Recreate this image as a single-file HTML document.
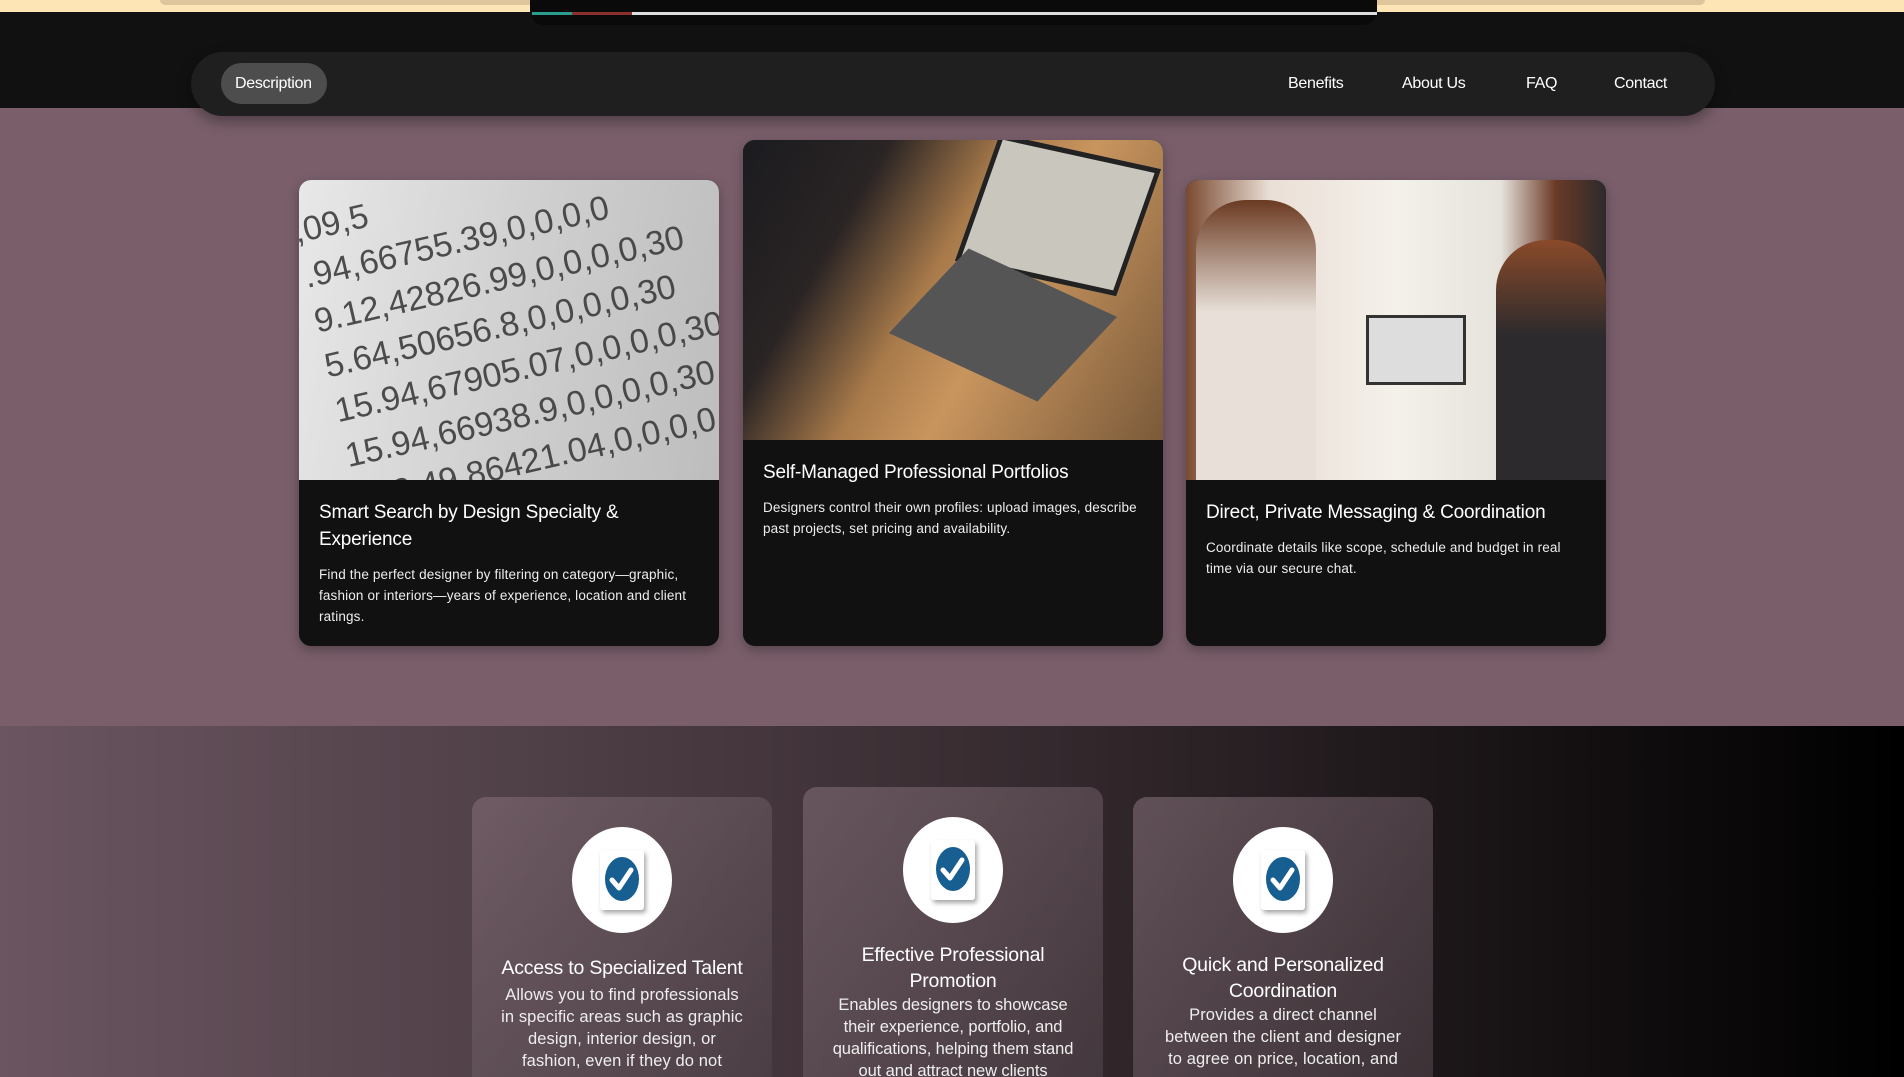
<!DOCTYPE html>
<html style="overflow:hidden;height:1077px"><head><meta charset="utf-8">
<style>
*{margin:0;padding:0;box-sizing:border-box}
body{width:1904px;height:1077px;overflow:hidden;background:#111;font-family:"Liberation Sans",sans-serif;color:#fff;position:relative}
.abs{position:absolute}
.nav{left:191px;top:52px;width:1524px;height:64px;background:#1f1f1f;border-radius:32px;box-shadow:0 6px 14px rgba(0,0,0,.35)}
.nav a{position:absolute;top:23px;font-size:16px;color:#fff;letter-spacing:-0.3px}
.pill{left:30px;top:11px;width:106px;height:41px;border-radius:21px;background:#4d4d4d}
.mauve{left:0;top:108px;width:1904px;height:618px;background:#7a5f6b}
.card{background:#111;border-radius:12px;overflow:hidden;box-shadow:0 4px 12px rgba(0,0,0,.3)}
.card .img{width:100%}
.card h3{font-size:19px;font-weight:normal;line-height:27px;margin:0 20px;letter-spacing:-0.2px}
.card p{font-size:13.5px;line-height:21px;margin:0 20px;color:#eee;letter-spacing:0.15px}
.bot{left:0;top:726px;width:1904px;height:351px;background:linear-gradient(90deg,#6a5560 0%,#3a2e33 50%,#000 100%)}
.bc{width:300px;border-radius:14px 14px 0 0;background:linear-gradient(135deg,rgba(130,108,118,.6),rgba(80,68,74,.6));text-align:center;overflow:hidden}
.circ{position:absolute;left:100px;top:30px;width:100px;height:106px;border-radius:50%;background:#fff}
.sq{position:absolute;left:28px;top:23px;width:44px;height:60px;background:#fff;border-radius:3px;box-shadow:2px 3px 5px rgba(0,0,0,.35)}
.bc h4{position:absolute;left:20px;right:20px;font-size:19.5px;font-weight:normal;line-height:26px;letter-spacing:-0.2px}
.bc p{position:absolute;left:26px;right:26px;font-size:16.5px;line-height:22px;color:#eee;letter-spacing:0.1px}
</style></head><body>
<div class="abs" style="left:0;top:0;width:1904px;height:12px;background:#fde5b6"></div>
<div class="abs" style="left:160px;top:0;width:1545px;height:5px;background:#dfc59c;border-radius:0 0 6px 6px"></div>
<div class="abs" style="left:530px;top:0;width:847px;height:25px;background:#0a0a0a;border-radius:0 0 14px 14px"></div>
<div class="abs" style="left:532px;top:12px;width:40px;height:3px;background:#2a9d8f"></div>
<div class="abs" style="left:572px;top:12px;width:60px;height:3px;background:#8b3030"></div>
<div class="abs" style="left:632px;top:12px;width:745px;height:3px;background:#ddd"></div>

<div class="mauve abs"></div>
<div class="nav abs">
<div class="pill abs"></div>
<a style="left:44px">Description</a>
<a style="left:1097px">Benefits</a>
<a style="left:1211px">About Us</a>
<a style="left:1335px">FAQ</a>
<a style="left:1423px">Contact</a>
</div>

<div class="card abs" style="left:299px;top:180px;width:420px;height:466px">
<div class="img" style="height:300px;background:linear-gradient(100deg,#e8e8e8,#d0d0d0 50%,#bdbdbd);overflow:hidden;position:relative">
<div style="position:absolute;left:-10px;top:0;transform:rotate(-13deg);transform-origin:0 0;font-size:34px;line-height:46px;color:#333;white-space:nowrap;margin-top:30px;opacity:.85">
,09,5<br>.94,66755.39,0,0,0,0<br>9.12,42826.99,0,0,0,0,30<br>5.64,50656.8,0,0,0,0,30<br>15.94,67905.07,0,0,0,0,30<br>15.94,66938.9,0,0,0,0,30<br>192.49,86421.04,0,0,0,0</div></div>
<h3 style="margin-top:19px">Smart Search by Design Specialty &amp; Experience</h3>
<p style="margin-top:11px">Find the perfect designer by filtering on category—graphic, fashion or interiors—years of experience, location and client ratings.</p>
</div>

<div class="card abs" style="left:743px;top:140px;width:420px;height:506px">
<div class="img" style="height:300px;background:linear-gradient(120deg,#1b1b1f 0%,#2a2424 25%,#a87a4a 45%,#c9955e 60%,#7a5a3a 100%);position:relative">
<div style="position:absolute;left:230px;top:10px;width:170px;height:130px;background:#c9c6be;transform:skew(-8deg) rotate(12deg);border:5px solid #222"></div>
<div style="position:absolute;left:160px;top:140px;width:200px;height:90px;background:#555;transform:skew(-30deg) rotate(20deg)"></div>
</div>
<h3 style="margin-top:19px">Self-Managed Professional Portfolios</h3>
<p style="margin-top:11px">Designers control their own profiles: upload images, describe past projects, set pricing and availability.</p>
</div>

<div class="card abs" style="left:1186px;top:180px;width:420px;height:466px">
<div class="img" style="height:300px;background:linear-gradient(90deg,#7a4a30 0%,#eadfd6 20%,#f4f1ea 50%,#e6e2dc 75%,#6a3a26 88%,#2c2a2c 100%);position:relative">
<div style="position:absolute;left:10px;top:20px;width:120px;height:280px;background:linear-gradient(180deg,#6b3a22,#e8e0d8 40%,#e8e0d8);border-radius:50px 50px 0 0"></div>
<div style="position:absolute;left:180px;top:135px;width:100px;height:70px;background:#ddd;border:3px solid #333"></div>
<div style="position:absolute;left:310px;top:60px;width:110px;height:240px;background:linear-gradient(180deg,#8a4a2a,#2c2a2c 40%);border-radius:50px 50px 0 0"></div>
</div>
<h3 style="margin-top:19px">Direct, Private Messaging &amp; Coordination</h3>
<p style="margin-top:11px">Coordinate details like scope, schedule and budget in real time via our secure chat.</p>
</div>

<div class="bot abs"></div>

<div class="bc abs" style="left:472px;top:797px;height:280px">
<div class="circ"><div class="sq"><svg width="44" height="60" viewBox="0 0 44 60"><ellipse cx="22" cy="29" rx="17" ry="22" fill="#175e91"/><path d="M12 30 L19 38 L31 20" stroke="#fff" stroke-width="5" fill="none" stroke-linecap="round" stroke-linejoin="round"/></svg></div></div>
<h4 style="top:158px">Access to Specialized Talent</h4>
<p style="top:187px">Allows you to find professionals in specific areas such as graphic design, interior design, or fashion, even if they do not</p>
</div>

<div class="bc abs" style="left:803px;top:787px;height:290px">
<div class="circ"><div class="sq"><svg width="44" height="60" viewBox="0 0 44 60"><ellipse cx="22" cy="29" rx="17" ry="22" fill="#175e91"/><path d="M12 30 L19 38 L31 20" stroke="#fff" stroke-width="5" fill="none" stroke-linecap="round" stroke-linejoin="round"/></svg></div></div>
<h4 style="top:155px">Effective Professional Promotion</h4>
<p style="top:207px;letter-spacing:-0.1px">Enables designers to showcase their experience, portfolio, and qualifications, helping them stand out and attract new clients</p>
</div>

<div class="bc abs" style="left:1133px;top:797px;height:280px">
<div class="circ"><div class="sq"><svg width="44" height="60" viewBox="0 0 44 60"><ellipse cx="22" cy="29" rx="17" ry="22" fill="#175e91"/><path d="M12 30 L19 38 L31 20" stroke="#fff" stroke-width="5" fill="none" stroke-linecap="round" stroke-linejoin="round"/></svg></div></div>
<h4 style="top:155px">Quick and Personalized Coordination</h4>
<p style="top:207px">Provides a direct channel between the client and designer to agree on price, location, and</p>
</div>
</body></html>
